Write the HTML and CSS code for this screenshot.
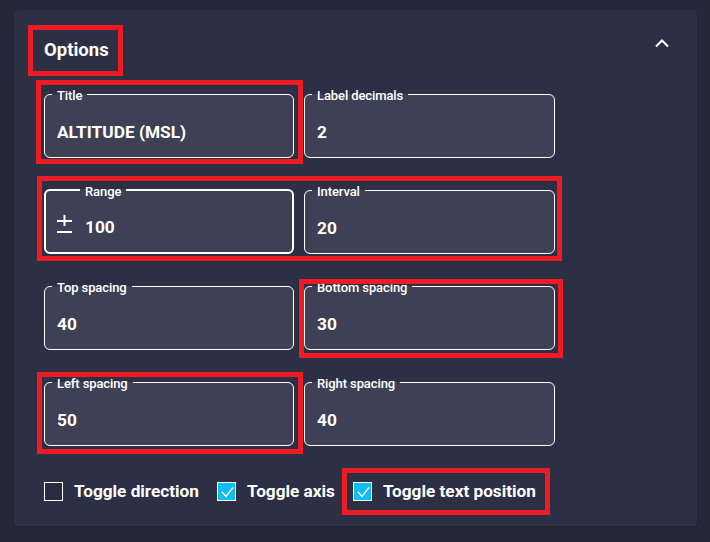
FILE: index.html
```html
<!DOCTYPE html>
<html>
<head>
<meta charset="utf-8">
<link rel="stylesheet" href="styles.css">
</head>
<body>
<div class="page">
  <section class="card">
    <header class="card-head">
      <h2 class="card-title">Options</h2>
      <button class="collapse" aria-label="collapse">
        <svg width="16" height="10" viewBox="0 0 16 10"><path d="M2 8.5 L8 2.5 L14 8.5" fill="none" stroke="#fff" stroke-width="2"/></svg>
      </button>
    </header>
    <div class="grid">
      <fieldset class="field"><legend>Title</legend><div class="value">ALTITUDE (MSL)</div></fieldset>
      <fieldset class="field"><legend>Label decimals</legend><div class="value">2</div></fieldset>
      <fieldset class="field focused"><legend>Range</legend><div class="value"><svg class="pm" width="15" height="19" viewBox="0 0 15 19"><path d="M0 6 H15 M7.5 0 V11 M0 17 H15" fill="none" stroke="#fff" stroke-width="2"/></svg>100</div></fieldset>
      <fieldset class="field"><legend>Interval</legend><div class="value">20</div></fieldset>
      <fieldset class="field"><legend>Top spacing</legend><div class="value">40</div></fieldset>
      <fieldset class="field"><legend>Bottom spacing</legend><div class="value">30</div></fieldset>
      <fieldset class="field"><legend>Left spacing</legend><div class="value">50</div></fieldset>
      <fieldset class="field"><legend>Right spacing</legend><div class="value">40</div></fieldset>
    </div>
    <div class="checks">
      <label class="check"><span class="box"></span>Toggle direction</label>
      <label class="check"><span class="box on"><svg width="17" height="17" viewBox="0 0 17 17"><path d="M4 9 L8 13.5 L15 4.5" fill="none" stroke="#fff" stroke-width="1.4"/></svg></span>Toggle axis</label>
      <label class="check"><span class="box on"><svg width="17" height="17" viewBox="0 0 17 17"><path d="M4 9 L8 13.5 L15 4.5" fill="none" stroke="#fff" stroke-width="1.4"/></svg></span>Toggle text position</label>
    </div>
  </section>
  <div class="mark m-options"></div>
  <div class="mark m-title"></div>
  <div class="mark m-range"></div>
  <div class="mark m-bottom"></div>
  <div class="mark m-left"></div>
  <div class="mark m-text"></div>
</div>
</body>
</html>
```
FILE: styles.css
```css
* { box-sizing: border-box; }
html, body { margin: 0; padding: 0; }
body {
  background: #262839;
  font-family: Roboto, "Liberation Sans", sans-serif;
  color: #fff;
  width: 710px;
  height: 542px;
  overflow: hidden;
}
.page {
  position: relative;
  padding: 10px 13px 0 14px;
}
.card {
  background: #2d2f45;
  border-radius: 4px;
  width: 683px;
  height: 516px;
  padding: 30px 28px 26px 30px;
  box-shadow: 0 1px 2px rgba(0,0,0,0.25);
}
.card-head {
  display: flex;
  justify-content: space-between;
  align-items: flex-start;
  height: 20px;
  margin-bottom: 25px;
}
.card-title {
  margin: 0;
  font-size: 18.5px;
  line-height: 20px;
  font-weight: 700;
}
.collapse {
  background: none;
  border: 0;
  padding: 0;
  margin: -2px -1px 0 0;
  width: 16px;
  height: 10px;
  display: block;
}
.collapse svg { display: block; }
.grid {
  display: grid;
  grid-template-columns: 250px 251px;
  column-gap: 10px;
  row-gap: 23px;
}
.field {
  margin: 0;
  height: 73px;
  border: 1px solid #fff;
  border-radius: 6px;
  background: #3e4055;
  padding: 0 12px;
  min-width: 0;
}
.field legend {
  font-size: 13px;
  line-height: 14px;
  font-weight: 500;
  padding: 4px 5px 0;
  margin-left: -5px;
  letter-spacing: -0.1px;
}
.field.focused {
  border-width: 2px;
  padding: 0 11px;
}
.field.focused legend { margin-left: 23px; }
.value {
  padding-top: 19px;
  font-size: 17.3px;
  line-height: 20px;
  font-weight: 700;
  display: flex;
  align-items: center;
}
.focused .value { padding-top: 18px; }
.pm {
  display: block;
  margin: -6px 13px 0 0;
}
.checks {
  display: flex;
  gap: 18px;
  margin-top: 36px;
}
.check {
  display: flex;
  align-items: center;
  gap: 11px;
  font-size: 17.2px;
  line-height: 19px;
  font-weight: 700;
}
.box {
  width: 19px;
  height: 19px;
  border: 1.5px solid #fff;
  background: #2a2c41;
  display: flex;
  align-items: center;
  justify-content: center;
}
.box.on {
  background: #0fbdf2;
  border-width: 1px;
}
.box svg { display: block; }
.mark {
  position: absolute;
  border: 5px solid #ed1c24;
}
.m-options { left: 28px; top: 25px; width: 95px; height: 51px; }
.m-title { left: 36px; top: 80px; width: 267px; height: 84px; }
.m-range { left: 37px; top: 176px; width: 525px; height: 85px; }
.m-bottom { left: 299px; top: 279px; width: 264px; height: 79px; }
.m-left { left: 37px; top: 372px; width: 266px; height: 82px; }
.m-text { left: 342px; top: 468px; width: 208px; height: 47px; }
```
